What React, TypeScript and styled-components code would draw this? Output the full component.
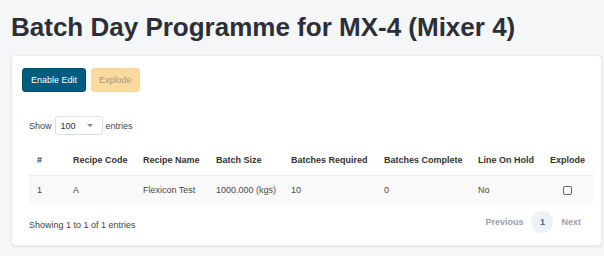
import React from "react";
import styled, { createGlobalStyle } from "styled-components";

const Global = createGlobalStyle`
  html, body { margin: 0; padding: 0; background: #f5f6f8; }
  body { font-family: "Liberation Sans", Arial, sans-serif; color: #333; }
  * { box-sizing: border-box; }
`;

const Page = styled.div`
  padding: 11px 2px 0 11px;
  width: 604px;
  height: 256px;
  overflow: hidden;
`;

const Title = styled.h1`
  margin: 0 0 12px 0;
  font-size: 26px;
  line-height: 32px;
  font-weight: 700;
  color: #2c2f38;
`;

const Card = styled.div`
  background: #fff;
  border: 1px solid #ececec;
  border-radius: 4px;
  box-shadow: 0 1px 2px rgba(0, 0, 0, 0.08);
  padding: 12px 10px 12px 10px;
  height: 191px;
`;

const Toolbar = styled.div`
  display: flex;
  gap: 5px;
`;

const Button = styled.button<{ $variant: "primary" | "warning" }>`
  height: 24px;
  padding: 0 ${(p) => (p.$variant === "primary" ? 8 : 7)}px;
  border-radius: 3px;
  font-family: inherit;
  font-size: 9px;
  cursor: pointer;
  border: 1px solid ${(p) => (p.$variant === "primary" ? "#004e6e" : "#f7d9a3")};
  background: ${(p) => (p.$variant === "primary" ? "#005b80" : "#fcd99c")};
  color: ${(p) => (p.$variant === "primary" ? "#ffffff" : "#a59a86")};
`;

const LengthRow = styled.div`
  display: flex;
  align-items: center;
  gap: 3px;
  margin: 24px 0 0 7px;
  font-size: 9px;
  color: #444;
`;

const Select = styled.div`
  width: 48px;
  height: 19px;
  border: 1px solid #dcdfe4;
  border-radius: 3px;
  display: flex;
  align-items: center;
  justify-content: space-between;
  padding: 0 9px 0 5px;
  font-size: 9px;
  color: #333;
`;

const Caret = styled.span`
  width: 0;
  height: 0;
  border-left: 3px solid transparent;
  border-right: 3px solid transparent;
  border-top: 3px solid #888;
`;

const Table = styled.table`
  margin: 10px 0 0 7px;
  width: 564px;
  border-collapse: collapse;
  font-size: 9px;
`;

const Th = styled.th`
  text-align: left;
  font-weight: 700;
  color: #333;
  height: 30px;
  padding: 0 0 0 8px;
  border-bottom: 1px solid #e9ebee;
  white-space: nowrap;
`;

const Td = styled.td<{ $indent?: number }>`
  height: 30px;
  padding: 0 0 0 ${(p) => p.$indent ?? 8}px;
  color: #4a4a4a;
  text-align: left;
  white-space: nowrap;
`;

const Row = styled.tr`
  background: #f9f9f9;
`;

const Checkbox = styled.span`
  display: inline-block;
  width: 9px;
  height: 9px;
  border: 1px solid #666;
  border-radius: 2px;
  background: #fff;
  vertical-align: middle;
`;

const Footer = styled.div`
  display: flex;
  align-items: flex-start;
  justify-content: space-between;
  margin: 6px 10px 0 7px;
  font-size: 9px;
  color: #444;
`;

const Info = styled.span`
  margin-top: 9px;
`;

const Pager = styled.div`
  display: flex;
  align-items: center;
  gap: 8px;
`;

const PageLink = styled.span<{ $active?: boolean }>`
  font-weight: 700;
  color: ${(p) => (p.$active ? "#4a6a9a" : "#9aa0aa")};
  ${(p) =>
    p.$active
      ? `width: 22px; height: 22px; border-radius: 50%; background: #edf1f8; display: flex; align-items: center; justify-content: center;`
      : ""}
`;

const columns: { label: string; width: number }[] = [
  { label: "#", width: 36 },
  { label: "Recipe Code", width: 70 },
  { label: "Recipe Name", width: 73 },
  { label: "Batch Size", width: 75 },
  { label: "Batches Required", width: 93 },
  { label: "Batches Complete", width: 94 },
  { label: "Line On Hold", width: 72 },
  { label: "Explode", width: 51 },
];

export default function App() {
  return (
    <>
      <Global />
      <Page>
        <Title>Batch Day Programme for MX-4 (Mixer 4)</Title>
        <Card>
          <Toolbar>
            <Button $variant="primary">Enable Edit</Button>
            <Button $variant="warning">Explode</Button>
          </Toolbar>
          <LengthRow>
            <span>Show</span>
            <Select>
              <span>100</span>
              <Caret />
            </Select>
            <span>entries</span>
          </LengthRow>
          <Table>
            <colgroup>
              {columns.map((c) => (
                <col key={c.label} style={{ width: c.width }} />
              ))}
            </colgroup>
            <thead>
              <tr>
                {columns.map((c) => (
                  <Th key={c.label}>{c.label}</Th>
                ))}
              </tr>
            </thead>
            <tbody>
              <Row>
                <Td>1</Td>
                <Td>A</Td>
                <Td>Flexicon Test</Td>
                <Td>1000.000 (kgs)</Td>
                <Td>10</Td>
                <Td>0</Td>
                <Td>No</Td>
                <Td $indent={21}>
                  <Checkbox />
                </Td>
              </Row>
            </tbody>
          </Table>
          <Footer>
            <Info>Showing 1 to 1 of 1 entries</Info>
            <Pager>
              <PageLink>Previous</PageLink>
              <PageLink $active>1</PageLink>
              <PageLink>Next</PageLink>
            </Pager>
          </Footer>
        </Card>
      </Page>
    </>
  );
}
